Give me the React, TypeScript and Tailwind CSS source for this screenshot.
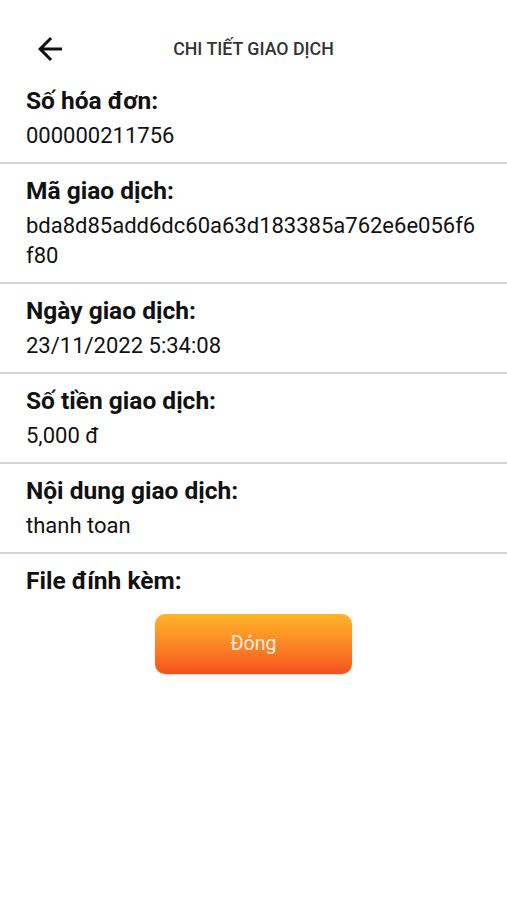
const rows: { label: string; value: string }[] = [
  { label: "Số hóa đơn:", value: "000000211756" },
  { label: "Mã giao dịch:", value: "bda8d85add6dc60a63d183385a762e6e056f6f80" },
  { label: "Ngày giao dịch:", value: "23/11/2022 5:34:08" },
  { label: "Số tiền giao dịch:", value: "5,000 đ" },
  { label: "Nội dung giao dịch:", value: "thanh toan" },
];

export default function App() {
  return (
    <div className="min-h-[900px] bg-white font-['Roboto',sans-serif] text-[#111]">
      {/* Header */}
      <div className="relative flex h-[48px] items-center justify-center mt-[25px]">
        <button className="absolute left-[32px] top-[6px] text-[#111]">
          <svg width="36" height="36" viewBox="0 0 24 24" fill="currentColor">
            <path d="M20 11H7.83l5.59-5.59L12 4l-8 8 8 8 1.41-1.41L7.83 13H20v-2z" />
          </svg>
        </button>
        <h1 className="text-[17.8px] font-medium text-[#333]">CHI TIẾT GIAO DỊCH</h1>
      </div>

      {rows.map((row, i) => (
        <div key={i}>
          <div className={`px-[26px] pb-[11px] ${i === 0 ? "pt-[13px]" : "pt-[12px]"}`}>
            <p className="text-[24.5px] font-bold leading-[30px]">{row.label}</p>
            <p className="mt-[5px] text-[22px] leading-[30px] break-all">{row.value}</p>
          </div>
          <div className="h-[2px] bg-[#d6d6d6]" />
        </div>
      ))}

      <div className="px-[26px] pt-[12px]">
        <p className="text-[24.5px] font-bold leading-[30px]">File đính kèm:</p>
      </div>

      <div className="mt-[18px] flex justify-center">
        <button className="h-[60px] w-[197px] rounded-[10px] bg-gradient-to-b from-[#fdb52a] to-[#f4511e] text-[19.5px] text-[#fdeee0] shadow-[0_1px_2px_rgba(0,0,0,0.15)]">
          Đóng
        </button>
      </div>
    </div>
  );
}
